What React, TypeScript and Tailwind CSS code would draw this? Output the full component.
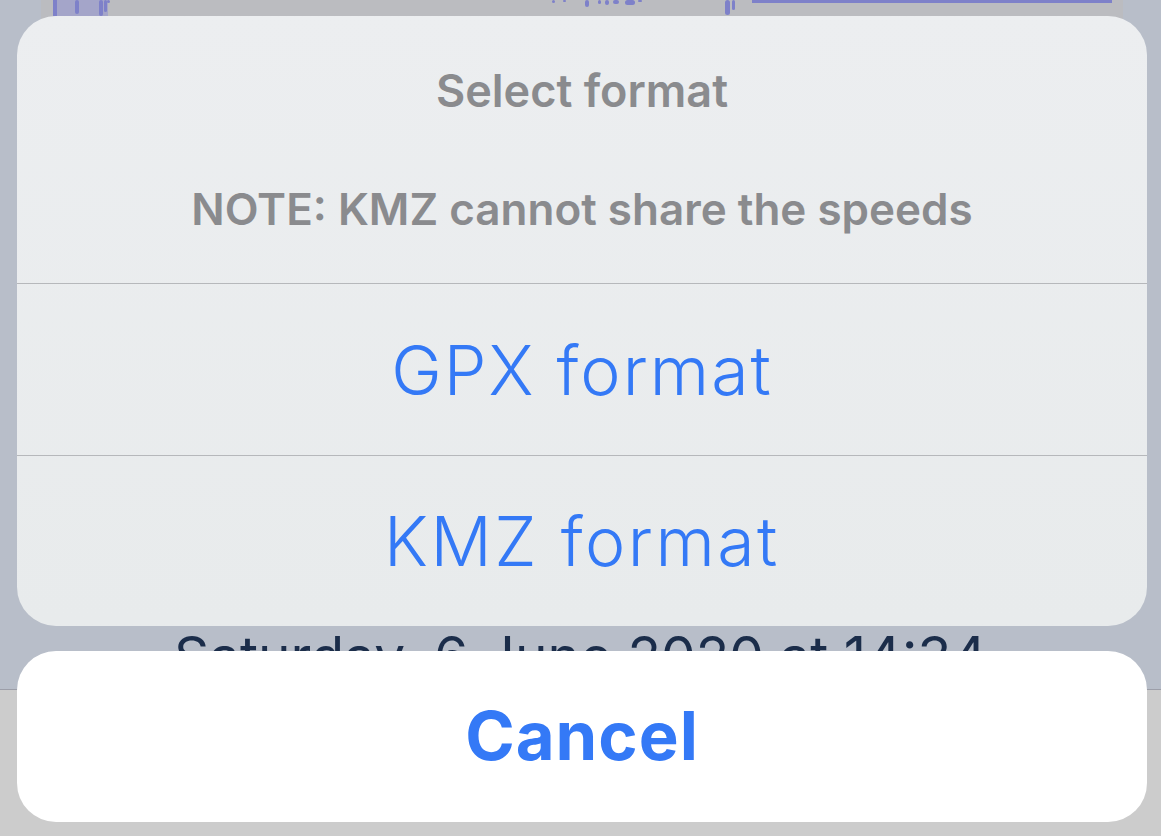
import React from "react";

const sf = { fontFamily: "Inter, 'Noto Sans', sans-serif" };
const mont = { fontFamily: "Inter, 'Noto Sans', sans-serif" };

function Chart() {
  return (
    <svg width="1059" height="16" viewBox="0 0 1059 16" className="block">
      <rect x="0" y="0" width="55" height="16" fill="#a4a5c9" />
      <rect x="22" y="0" width="4" height="14" rx="2" fill="#7e81c9" />
      <rect x="0" y="0" width="4" height="16" fill="#7e81c9" />
      <rect x="46" y="0" width="4" height="16" rx="2" fill="#7e81c9" />
      <rect x="51" y="0" width="3" height="12" rx="1.5" fill="#7e81c9" />
      <rect x="54" y="0" width="3" height="3" rx="1.5" fill="#7e81c9" />
      <rect x="499" y="0" width="3" height="3" rx="1.5" fill="#7e81c9" />
      <rect x="510" y="0" width="3" height="2" rx="1" fill="#7e81c9" />
      <rect x="532" y="0" width="4" height="7" rx="2" fill="#7e81c9" />
      <rect x="545" y="0" width="3" height="4" rx="1.5" fill="#7e81c9" />
      <rect x="552" y="0" width="4" height="5" rx="2" fill="#7e81c9" />
      <rect x="560" y="0" width="6" height="4" rx="2" fill="#7e81c9" />
      <rect x="572" y="0" width="10" height="5" rx="2.5" fill="#7e81c9" />
      <rect x="585" y="0" width="4" height="2" rx="1" fill="#7e81c9" />
      <rect x="672" y="0" width="5" height="15" rx="2.5" fill="#7e81c9" />
      <rect x="679" y="0" width="3" height="10" rx="1.5" fill="#7e81c9" />
      <rect x="699" y="0" width="360" height="3" fill="#7e81c9" />
    </svg>
  );
}

export default function App() {
  return (
    <div className="relative w-[1161px] h-[836px] overflow-hidden bg-[#b8bec9]">
      {/* background content */}
      <div className="flex flex-col h-full">
        <div className="mx-[41px] w-[1082px] h-[600px] bg-[#bbbcc0] pl-[12px] shrink-0">
          <Chart />
        </div>
        <div
          className="mt-[24px] text-center text-[55px] leading-[64px] text-[#1b2d4a] whitespace-nowrap"
          style={mont}
        >
          Saturday, 6 June 2020 at 14:34
        </div>
        <div className="flex-1 mt-[1px] bg-[#cccccc] border-t border-[#9c9ea8]" />
      </div>

      {/* action sheet overlay */}
      <div className="absolute inset-0 flex flex-col pl-[17px] pt-[16px]">
        <div className="w-[1130px] h-[610px] rounded-[39px] bg-gradient-to-b from-[#eceef0] to-[#e8ebec] flex flex-col overflow-hidden">
          <div className="h-[267px] flex flex-col items-center pt-[50px]" style={sf}>
            <div className="text-[45px] leading-[50px] font-semibold text-[#8a8b8e]">Select format</div>
            <div className="mt-[68px] text-[44px] leading-[50px] font-semibold text-[#8a8b8e]">
              NOTE: KMZ cannot share the speeds
            </div>
          </div>
          <div className="h-[172px] border-t border-[#b6b8bb] flex items-center justify-center">
            <span className="text-[68px] font-light text-[#3479f6] tracking-[2px]" style={mont}>
              GPX format
            </span>
          </div>
          <div className="flex-1 border-t border-[#b6b8bb] flex items-center justify-center">
            <span className="text-[68px] font-light text-[#3479f6] tracking-[2.5px]" style={mont}>
              KMZ format
            </span>
          </div>
        </div>
        <div className="mt-[25px] w-[1130px] h-[171px] rounded-[39px] bg-white flex items-center justify-center">
          <span className="text-[67px] font-bold text-[#3479f6] tracking-[1px]" style={mont}>
            Cancel
          </span>
        </div>
      </div>
    </div>
  );
}
